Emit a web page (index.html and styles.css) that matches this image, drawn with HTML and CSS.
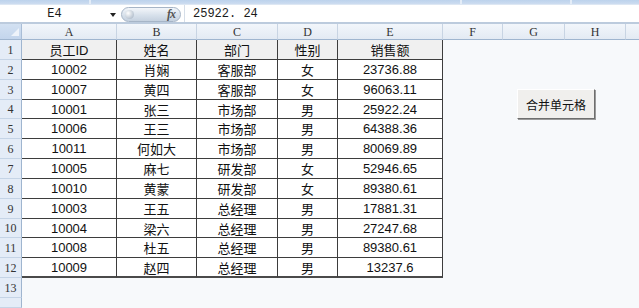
FILE: index.html
```html
<!DOCTYPE html>
<html lang="zh">
<head>
<meta charset="utf-8">
<title>合并单元格</title>
<link rel="stylesheet" href="styles.css">
</head>
<body>
<div class="app">
  <div class="ribbon">
    <div class="seg s1"></div>
    <div class="seg s2"></div>
    <div class="seg s3"></div>
    <div class="seg s4"></div>
  </div>
  <div class="fbar">
    <div class="namebox"><span class="ref">E4</span><span class="arrow"></span></div>
    <div class="pill"><span class="knob"></span><span class="fx">fx</span></div>
    <div class="formula">25922. 24</div>
  </div>
  <div class="sheet">
    <div class="corner"><span class="tri"></span></div>
    <div class="colh">A</div><div class="colh">B</div><div class="colh">C</div><div class="colh">D</div><div class="colh">E</div><div class="colh">F</div><div class="colh">G</div><div class="colh">H</div><div class="colh last"></div>

    <div class="rowh">1</div><div class="c hd">员工ID</div><div class="c hd">姓名</div><div class="c hd">部门</div><div class="c hd">性别</div><div class="c hd">销售额</div><div class="blank"></div>
    <div class="rowh">2</div><div class="c">10002</div><div class="c">肖娴</div><div class="c">客服部</div><div class="c">女</div><div class="c">23736.88</div><div class="blank"></div>
    <div class="rowh">3</div><div class="c">10007</div><div class="c">黄四</div><div class="c">客服部</div><div class="c">女</div><div class="c">96063.11</div><div class="blank"></div>
    <div class="rowh">4</div><div class="c">10001</div><div class="c">张三</div><div class="c">市场部</div><div class="c">男</div><div class="c">25922.24</div><div class="blank"></div>
    <div class="rowh">5</div><div class="c">10006</div><div class="c">王三</div><div class="c">市场部</div><div class="c">男</div><div class="c">64388.36</div><div class="blank"></div>
    <div class="rowh">6</div><div class="c">10011</div><div class="c">何如大</div><div class="c">市场部</div><div class="c">男</div><div class="c">80069.89</div><div class="blank"></div>
    <div class="rowh">7</div><div class="c">10005</div><div class="c">麻七</div><div class="c">研发部</div><div class="c">女</div><div class="c">52946.65</div><div class="blank"></div>
    <div class="rowh">8</div><div class="c">10010</div><div class="c">黄蒙</div><div class="c">研发部</div><div class="c">女</div><div class="c">89380.61</div><div class="blank"></div>
    <div class="rowh">9</div><div class="c">10003</div><div class="c">王五</div><div class="c">总经理</div><div class="c">男</div><div class="c">17881.31</div><div class="blank"></div>
    <div class="rowh">10</div><div class="c">10004</div><div class="c">梁六</div><div class="c">总经理</div><div class="c">男</div><div class="c">27247.68</div><div class="blank"></div>
    <div class="rowh">11</div><div class="c">10008</div><div class="c">杜五</div><div class="c">总经理</div><div class="c">男</div><div class="c">89380.61</div><div class="blank"></div>
    <div class="rowh">12</div><div class="c lastrow">10009</div><div class="c lastrow">赵四</div><div class="c lastrow">总经理</div><div class="c lastrow">男</div><div class="c lastrow">13237.6</div><div class="blank"></div>
    <div class="rowh">13</div><div class="blank wide"></div>
    <div class="rowh"></div><div class="blank wide"></div>

    <button class="merge" type="button">合并单元格</button>
  </div>
</div>
</body>
</html>
```

FILE: styles.css
```css
* { box-sizing: border-box; }
html, body { margin: 0; padding: 0; }
body {
  width: 639px;
  height: 308px;
  overflow: hidden;
  background: #f7f9fb;
  font-family: "Liberation Sans", "Noto Sans CJK SC", sans-serif;
}
.app { width: 639px; height: 308px; display: flex; flex-direction: column; }

/* ribbon strip */
.ribbon {
  height: 5px;
  display: flex;
  gap: 2px;
  background: #e3ecf7;
  border-bottom: 1px solid #dde7f3;
}
.seg { height: 4px; background: linear-gradient(#bcd2ec, #cddcf0); }
.s1 { width: 89px; }
.s2 { width: 369px; }
.s3 { width: 108px; }
.s4 { flex: 1; }

/* formula bar */
.fbar {
  height: 19px;
  display: flex;
  align-items: stretch;
  background: #ffffff;
  border-bottom: 2px solid #bccbdd;
}
.namebox {
  width: 121px;
  position: relative;
  display: flex;
  align-items: center;
  justify-content: center;
  font-family: "Liberation Mono", "DejaVu Sans Mono", monospace;
  font-size: 12px;
  color: #1a1a1a;
  padding-right: 12px;
}
.arrow {
  position: absolute;
  right: 5px;
  top: 8px;
  width: 0;
  height: 0;
  border-left: 3px solid transparent;
  border-right: 3px solid transparent;
  border-top: 4px solid #222;
}
.pill {
  width: 60px;
  height: 15px;
  margin-top: 2px;
  border-radius: 8px;
  border: 1px solid #a6b5c7;
  background: linear-gradient(#f3f6fa, #d5dfea 60%, #c5d1df);
  display: flex;
  align-items: center;
  justify-content: space-between;
  padding: 0 4px 0 3px;
}
.knob {
  width: 9px;
  height: 9px;
  border-radius: 50%;
  background: radial-gradient(circle at 35% 35%, #ffffff, #b9c4d1 70%, #9aa8b8);
}
.fx {
  font-family: "Liberation Serif", serif;
  font-style: italic;
  font-weight: bold;
  font-size: 12px;
  color: #555;
  letter-spacing: -1px;
  padding-right: 1px;
}
.formula {
  flex: 1;
  margin-left: 3px;
  border-left: 1px solid #d6dee8;
  padding-left: 8px;
  display: flex;
  align-items: center;
  font-family: "Liberation Mono", "DejaVu Sans Mono", monospace;
  font-size: 12px;
  color: #1a1a1a;
}

/* sheet grid */
.sheet {
  position: relative;
  flex: 1;
  display: grid;
  grid-template-columns: 22px 95px 80px 81px 60px 105px 60px 62px 61px 1fr;
  grid-template-rows: 16px 20px 20px 20px 19px 20px 20px 20px 20px 20px 19px 20px 20px 20px 1fr;
}
.corner {
  position: relative;
  background: linear-gradient(#d3e1f2, #c3d5ec);
  border-right: 1px solid #a9bdd6;
  border-bottom: 1px solid #9fb5cf;
}
.tri {
  position: absolute;
  right: 2px;
  bottom: 3px;
  width: 0;
  height: 0;
  border-left: 8px solid transparent;
  border-bottom: 8px solid #eef3fa;
}
.colh {
  background: linear-gradient(#f2f6fb, #e3eaf3);
  border-right: 1px solid #c8d4e3;
  border-bottom: 1px solid #9fb5cf;
  display: flex;
  align-items: center;
  justify-content: center;
  padding-top: 1px;
  font-family: "Liberation Serif", serif;
  font-size: 12px;
  color: #333;
}
.colh.last { border-right: none; }
.rowh {
  background: #e4ecf7;
  border-right: 1px solid #9fb5cf;
  border-bottom: 1px solid #c5d4e6;
  display: flex;
  align-items: flex-end;
  justify-content: center;
  padding-bottom: 1px;
  font-family: "Liberation Serif", serif;
  font-size: 12px;
  color: #333;
}
.c {
  background: #ffffff;
  border-right: 1px solid #3d3d3d;
  border-bottom: 1px solid #3d3d3d;
  display: flex;
  align-items: center;
  justify-content: center;
  font-size: 13px;
  color: #111;
  white-space: nowrap;
}
.c.hd { background: #f0f0f0; }
.c.lastrow { border-bottom: 2px solid #4a4a4a; }
.blank { grid-column: span 4; }
.blank.wide { grid-column: span 9; }

/* floating form button */
.merge {
  position: absolute;
  left: 517px;
  top: 65px;
  width: 78px;
  height: 30px;
  margin: 0;
  padding: 0;
  background: #f0efed;
  border: 1px solid;
  border-color: #ffffff #6e6e6e #6e6e6e #ffffff;
  box-shadow: 1px 1px 0 #9a9a9a;
  font-family: "Noto Sans CJK SC", sans-serif;
  font-size: 12px;
  color: #111;
}
```
